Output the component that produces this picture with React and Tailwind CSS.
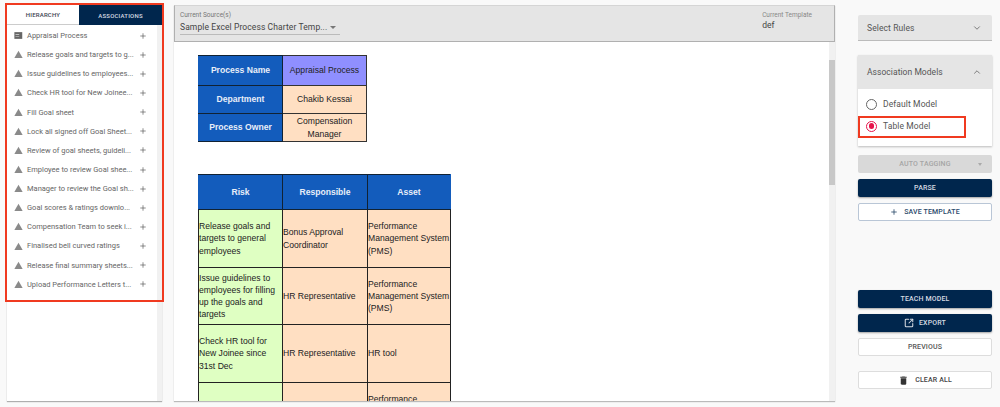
import { ChevronDown, ChevronUp, Plus, SquareArrowOutUpRight } from 'lucide-react'

const items = [
  'Release goals and targets to g...',
  'Issue guidelines to employees...',
  'Check HR tool for New Joinee...',
  'Fill Goal sheet',
  'Lock all signed off Goal Sheet...',
  'Review of goal sheets, guideli...',
  'Employee to review Goal shee...',
  'Manager to review the Goal sh...',
  'Goal scores & ratings downlo...',
  'Compensation Team to seek i...',
  'Finalised bell curved ratings',
  'Release final summary sheets...',
  'Upload Performance Letters t...',
]

const riskRows = [
  { h: 'h-[58px]', risk: 'Release goals and targets to general employees', who: 'Bonus Approval Coordinator', asset: 'Performance Management System (PMS)' },
  { h: 'h-[57px]', risk: 'Issue guidelines to employees for filling up the goals and targets', who: 'HR Representative', asset: 'Performance Management System (PMS)' },
  { h: 'h-[58px]', risk: 'Check HR tool for New Joinee since 31st Dec', who: 'HR Representative', asset: 'HR tool' },
  { h: 'h-[58px]', risk: '', who: '', asset: 'Performance Management System (PMS)' },
]

function WarnIcon() {
  return (
    <svg viewBox="0 0 24 24" className="w-[9px] h-[9px] shrink-0 fill-[#8a8a8a]">
      <path d="M1 21h22L12 2 1 21z" />
    </svg>
  )
}

function TableIcon() {
  return (
    <svg viewBox="0 0 24 24" className="w-[9px] h-[9px] shrink-0 fill-[#666]">
      <path d="M1 3h21v18H1z" />
      <path d="M4 8h10v1.8H4zM4 13h10v1.8H4z" fill="#ddd" />
    </svg>
  )
}

function TrashIcon() {
  return (
    <svg viewBox="0 0 24 24" className="w-[11px] h-[11px] fill-[#333]">
      <path d="M6 19c0 1.1.9 2 2 2h8c1.1 0 2-.9 2-2V7H6v12zM19 4h-3.5l-1-1h-5l-1 1H5v2h14V4z" />
    </svg>
  )
}

function Row({ icon, label }) {
  return (
    <div className="flex items-center h-[19.15px] pl-[7px] pr-[10px]">
      {icon}
      <span className="ml-[4px] whitespace-nowrap text-[7.5px] text-[#666]">{label}</span>
      <Plus className="ml-auto w-[8px] h-[8px] text-[#555]" strokeWidth={2} />
    </div>
  )
}

function OutlineBtn({ children, className }) {
  return (
    <button className={`h-[18px] w-full flex items-center justify-center gap-[6px] bg-white border rounded-[2px] text-[7px] font-medium tracking-[0.15px] ${className}`}>
      {children}
    </button>
  )
}

function DarkBtn({ children }) {
  return (
    <button className="h-[18px] w-full flex items-center justify-center gap-[5px] bg-[#00264d] rounded-[2px] shadow-[0_1px_2px_rgba(0,0,0,0.35)] text-[7px] font-medium tracking-[0.15px] text-[#d5dbe2]">
      {children}
    </button>
  )
}

export default function App() {
  return (
    <div className="relative w-[1000px] h-[407px] overflow-hidden bg-[#f9f9f9] font-['Roboto',sans-serif] flex">
      {/* Left tree */}
      <aside className="ml-[7px] mt-[5px] mb-[6px] w-[155px] bg-white shadow-[0_1px_1px_rgba(0,0,0,0.3)] flex flex-col relative">
        <div className="flex h-[20px] shrink-0 text-[6px] font-medium tracking-[0.2px]">
          <div className="w-[72px] flex items-center justify-center text-[#3b4450] border-b border-[#ccc]">HIERARCHY</div>
          <div className="flex-1 flex items-center justify-center bg-[#00264d] text-[#d5dbe2]">ASSOCIATIONS</div>
        </div>
        <div className="pt-[1px] flex-1 mr-[5px]">
          <Row icon={<TableIcon />} label="Appraisal Process" />
          {items.map(label => <Row key={label} icon={<WarnIcon />} label={label} />)}
        </div>
        <div className="absolute right-0 top-[20px] bottom-0 w-[5px] bg-[#f1f1f1]" />
      </aside>

      {/* Center document */}
      <main className="ml-[12px] mt-[5px] mb-[6px] w-[661px] bg-white shadow-[0_1px_1px_rgba(0,0,0,0.25)] flex flex-col relative overflow-hidden">
        <header className="h-[37px] shrink-0 bg-[#e5e5e5] border border-[#b0b0b0] border-t-[#d5d5d5] flex justify-between pl-[5px] pr-[22px] pt-[5px]">
          <div>
            <div className="text-[6.5px] leading-[8px] text-[#777]">Current Source(s)</div>
            <div className="mt-[1px] w-[160px] h-[15px] border-b border-[#bbb] flex items-center justify-between text-[8.5px] tracking-[0.1px] text-[#444]">
              <span className="whitespace-nowrap">Sample Excel Process Charter Temp...</span>
              <span className="mr-[4px] border-x-[3px] border-t-[3px] border-x-transparent border-t-[#777]" />
            </div>
          </div>
          <div>
            <div className="text-[6.5px] leading-[8px] text-[#888]">Current Template</div>
            <div className="mt-[1px] text-[8.5px] leading-[10px] text-[#444]">def</div>
          </div>
        </header>

        <div className="pl-[24px] pt-[13px] font-['Liberation_Sans',Arial,sans-serif] text-[8.6px] leading-[12.2px]">
          <table className="table-fixed border-collapse w-[169px] text-center text-[#222]">
            <tbody>
              <tr className="h-[30px]">
                <td className="w-[84px] border border-[#123] border-l-[#135cbc] bg-[#135cbc] font-bold text-[#e8eef8]">Process Name</td>
                <td className="border border-[#333] bg-[#8f8fff]">Appraisal Process</td>
              </tr>
              <tr className="h-[28px]">
                <td className="border border-[#123] border-l-[#135cbc] bg-[#135cbc] font-bold text-[#e8eef8]">Department</td>
                <td className="border border-[#333] bg-[#ffdfc2]">Chakib Kessai</td>
              </tr>
              <tr className="h-[28px]">
                <td className="border border-[#123] border-l-[#135cbc] bg-[#135cbc] font-bold text-[#e8eef8]">Process Owner</td>
                <td className="border border-[#333] bg-[#ffdfc2]">Compensation Manager</td>
              </tr>
            </tbody>
          </table>

          <table className="mt-[32px] table-fixed border-collapse w-[253px] text-[#222]">
            <thead>
              <tr className="h-[35px] bg-[#135cbc] font-bold text-[#e8eef8] text-center">
                <th className="w-[84px] border border-[#123] border-l-[#135cbc]">Risk</th>
                <th className="w-[85px] border border-[#123]">Responsible</th>
                <th className="border border-[#123] border-r-[#135cbc]">Asset</th>
              </tr>
            </thead>
            <tbody>
              {riskRows.map((row, i) => (
                <tr key={i} className={row.h}>
                  <td className="border border-[#222] bg-[#dfffc2] align-middle">{row.risk}</td>
                  <td className="border border-[#222] bg-[#ffdfc2] align-middle">{row.who}</td>
                  <td className="border border-[#222] bg-[#ffdfc2] align-middle">{row.asset}</td>
                </tr>
              ))}
            </tbody>
          </table>
        </div>

        {/* Scrollbar */}
        <div className="absolute right-0 top-[37px] bottom-0 w-[6px] bg-[#f1f1f1]">
          <div className="mt-[18px] h-[125px] bg-[#c8c8c8]" />
        </div>
      </main>

      {/* Right controls */}
      <aside className="ml-[23px] mt-[15px] w-[134px] flex flex-col">
        <div className="h-[26px] bg-[#e5e5e5] border-b border-[#bbb] rounded-t-[2px] flex items-center justify-between pl-[9px] pr-[10px] pt-[1px] text-[8.5px] tracking-[0.1px] text-[#555]">
          Select Rules
          <ChevronDown className="w-[10px] h-[10px] text-[#666]" />
        </div>

        <div className="mt-[14px] bg-white shadow-[0_1px_2px_rgba(0,0,0,0.25)]">
          <div className="h-[34px] bg-[#e5e5e5] flex items-center justify-between pl-[9px] pr-[10px] text-[8.5px] tracking-[0.05px] text-[#555]">
            Association Models
            <ChevronUp className="w-[10px] h-[10px] text-[#666]" />
          </div>
          <div className="h-[57px] pl-[8px] pt-[8px] text-[8.5px] tracking-[0.1px] text-[#555]">
            <label className="h-[14px] flex items-center gap-[6px]">
              <span className="w-[11px] h-[11px] rounded-full border border-[#666]" />
              Default Model
            </label>
            <label className="mt-[8px] h-[14px] flex items-center gap-[6px]">
              <span className="w-[11px] h-[11px] rounded-full border border-[#e6134a] flex items-center justify-center">
                <span className="w-[5.5px] h-[5.5px] rounded-full bg-[#e6134a]" />
              </span>
              Table Model
            </label>
          </div>
        </div>

        <button className="mt-[9px] h-[18px] w-full relative flex items-center justify-center bg-[#d9d9d9] rounded-[2px] text-[7px] font-medium tracking-[0.15px] text-[#a5a5a5]">
          AUTO TAGGING
          <span className="absolute right-[10px] border-x-[2.5px] border-t-[3px] border-x-transparent border-t-[#aaa]" />
        </button>
        <div className="mt-[6px]"><DarkBtn>PARSE</DarkBtn></div>
        <div className="mt-[6px]">
          <OutlineBtn className="border-[#b9c6d6] text-[#2c4a6b]">
            <Plus className="w-[8px] h-[8px]" strokeWidth={2.5} />
            SAVE TEMPLATE
          </OutlineBtn>
        </div>

        <div className="mt-[69px]"><DarkBtn>TEACH MODEL</DarkBtn></div>
        <div className="mt-[6px]">
          <DarkBtn>
            <SquareArrowOutUpRight className="w-[10px] h-[10px]" strokeWidth={2.5} />
            EXPORT
          </DarkBtn>
        </div>
        <div className="mt-[6px]">
          <OutlineBtn className="border-[#ddd] text-[#555]">PREVIOUS</OutlineBtn>
        </div>
        <div className="mt-[15px]">
          <OutlineBtn className="border-[#ddd] text-[#444]">
            <TrashIcon />
            CLEAR ALL
          </OutlineBtn>
        </div>
      </aside>

      {/* Annotation boxes */}
      <div className="absolute left-[5px] top-[3px] w-[159px] h-[299px] border-2 border-[#f03a20]" />
      <div className="absolute left-[858px] top-[116px] w-[108px] h-[22px] border-2 border-[#f03a20]" />
    </div>
  )
}
